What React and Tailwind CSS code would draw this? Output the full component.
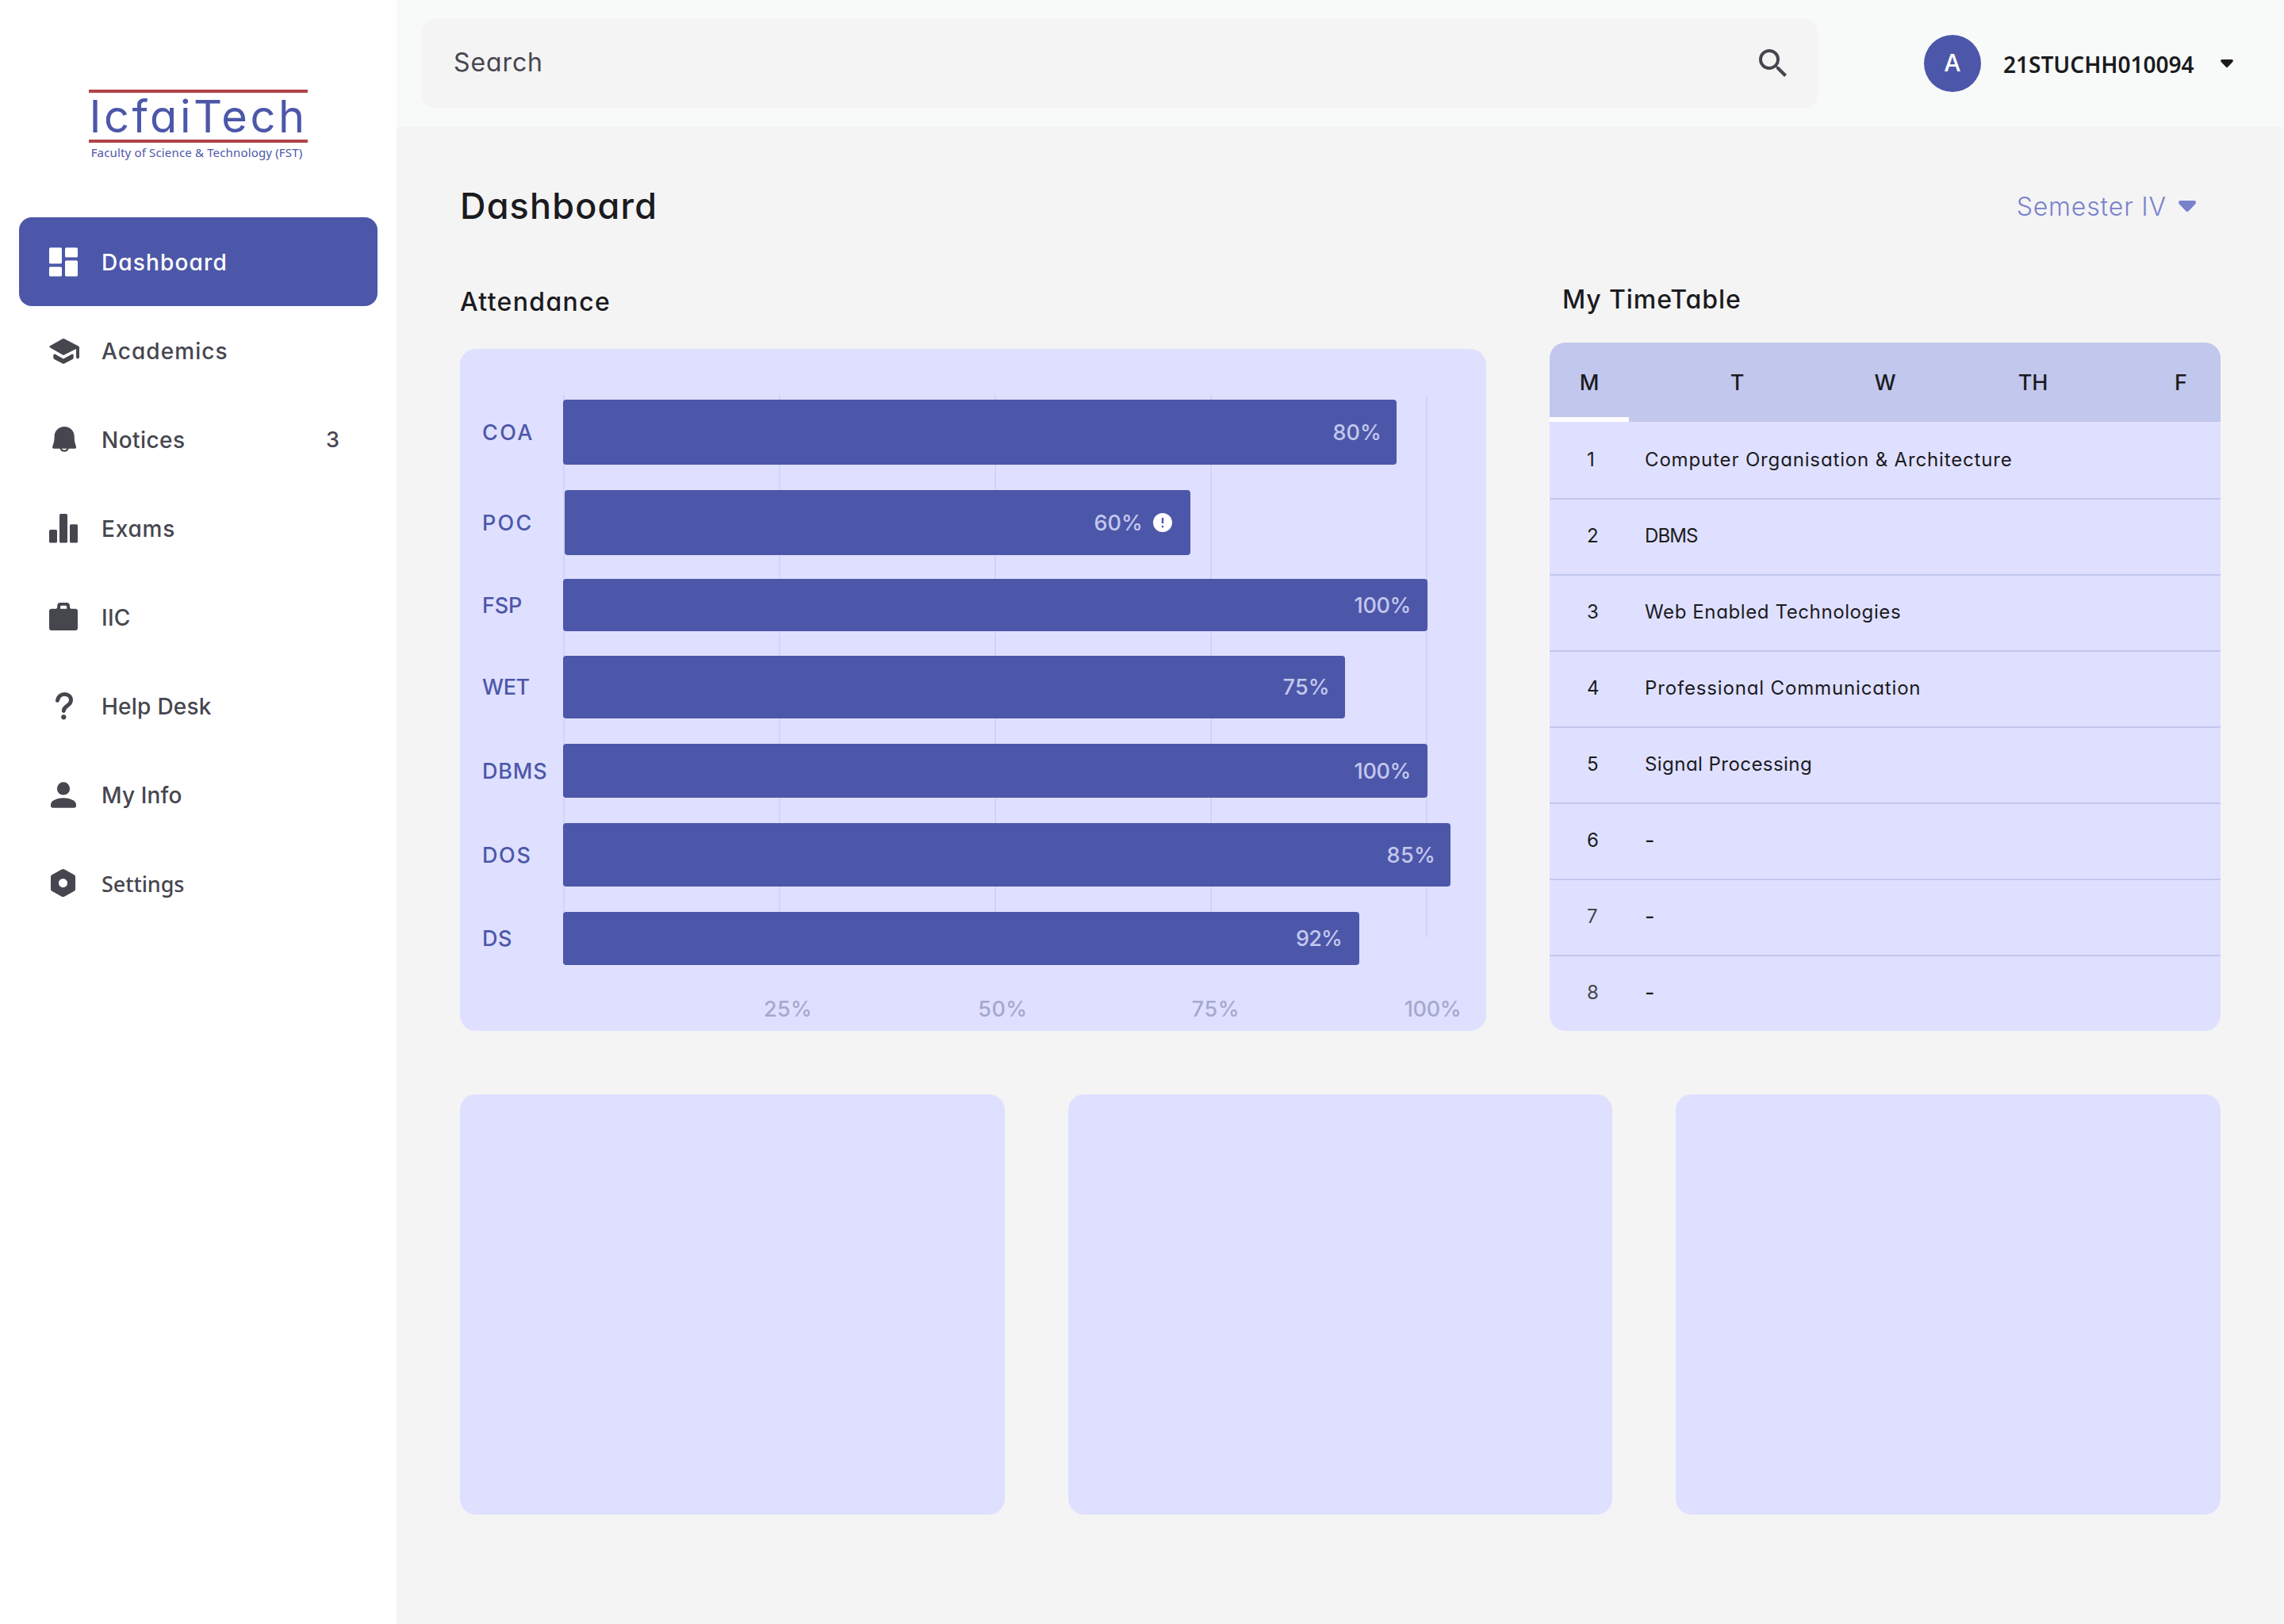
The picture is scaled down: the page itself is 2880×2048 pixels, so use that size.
import React from "react";
import { MdSearch } from "react-icons/md";

function DashboardIcon() {
  return (
    <svg className="size-12" viewBox="0 0 48 48" fill="currentColor">
      <rect x="6" y="6.3" width="16" height="20.2" rx="1.6" />
      <rect x="26" y="6.3" width="16" height="12.2" rx="1.6" />
      <rect x="6" y="30.4" width="16" height="12.2" rx="1.6" />
      <rect x="26" y="22.4" width="16" height="20.2" rx="1.6" />
    </svg>
  );
}

function AcademicsIcon() {
  return (
    <svg className="size-12" viewBox="0 0 48 48" fill="currentColor">
      <path d="M22.9 9.2Q24 8.6 25.1 9.2L43 18.4Q44 19 44 20.1V32.6Q44 34.4 42 34.4T40 32.6V22L25 29.6Q24 30.1 23 29.6L7 20.3Q5.4 19.3 7 18.2Z" />
      <path d="M13.2 28.5L24 34.4L34.8 28.5Q36.7 28 36.7 30V33Q36.7 34.3 35.6 34.9L25 40.6Q24 41.1 23 40.6L12.4 34.9Q11.3 34.3 11.3 33V30Q11.3 28 13.2 28.5Z" />
    </svg>
  );
}

function NoticesIcon() {
  return (
    <svg className="size-12" viewBox="0 0 48 48" fill="currentColor">
      <path d="M25.2 8C32.2 8 37.6 13.2 37.7 20C37.7 25.6 38.4 28.8 39.8 32.6Q40.6 35.8 38.4 35.8H12Q9.6 35.8 10.3 32.6C11.9 28.8 12.6 25.6 12.6 20C12.8 13.2 18.2 8 25.2 8Z" />
      <path d="M20.3 34.5a4.9 5.1 0 0 0 9.6 0" fill="none" stroke="currentColor" strokeWidth="2.2" />
    </svg>
  );
}

function ExamsIcon() {
  return (
    <svg className="size-12" viewBox="0 0 48 48" fill="currentColor">
      <rect x="6" y="26" width="10" height="16.6" rx="1.5" />
      <rect x="19" y="6" width="10" height="36.6" rx="1.5" />
      <rect x="32" y="19.2" width="10" height="23.4" rx="1.5" />
    </svg>
  );
}

function BriefcaseIcon() {
  return (
    <svg className="size-12" viewBox="0 0 48 48" fill="currentColor" fillRule="evenodd">
      <path d="M9 13.8H14.5Q16.2 13.6 16.2 11.5V10Q16.4 6 20 6H28.3Q31.8 6 32 10V11.5Q32 13.6 33.7 13.8H39Q42 13.8 42 16.8V38Q42 41 39 41H9Q6 41 6 38V16.8Q6 13.8 9 13.8ZM21.5 9.8Q20 9.8 20 11.3V13.8H28.2V11.3Q28.2 9.8 26.7 9.8Z" />
    </svg>
  );
}

function HelpIcon() {
  return (
    <svg className="size-12" viewBox="0 0 48 48" fill="none">
      <path d="M16.5 17.3C17.3 12.6 20.8 9.6 25.3 9.6C30.2 9.6 33.5 12.7 33.5 17C33.5 24.2 24.4 23.8 24.3 30.4" stroke="currentColor" strokeWidth="5" strokeLinecap="round" />
      <circle cx="24.3" cy="38.3" r="3.1" fill="currentColor" />
    </svg>
  );
}

function PersonIcon() {
  return (
    <svg className="size-12" viewBox="0 0 48 48" fill="currentColor">
      <circle cx="24" cy="16.4" r="8.1" />
      <path d="M24 28.3C31 28.3 40 31.4 40 36.5V38Q40 40.7 37.3 40.7H10.7Q8 40.7 8 38V36.5C8 31.4 17 28.3 24 28.3Z" />
    </svg>
  );
}

function SettingsIcon() {
  return (
    <svg className="size-12" viewBox="0 0 48 48" fill="currentColor" fillRule="evenodd">
      <path d="M22 6.3Q23.5 5.6 25 6.3L37.6 13.3Q39 14.1 39 15.6V31.4Q39 32.9 37.6 33.7L25 40.7Q23.5 41.4 22 40.7L9.4 33.7Q8 32.9 8 31.4V15.6Q8 14.1 9.4 13.3ZM23.5 18A5.6 5.6 0 1 0 23.5 29.2A5.6 5.6 0 1 0 23.5 18Z" />
    </svg>
  );
}

function Caret({ className }) {
  return (
    <svg className={className} viewBox="0 0 22 14" fill="currentColor">
      <path d="M2.2 0H19.8Q22 0 22 2.2Q22 3.4 21 4.4L12.6 13.2Q11 14.6 9.4 13.2L1 4.4Q0 3.4 0 2.2Q0 0 2.2 0Z" />
    </svg>
  );
}

function AlertIcon() {
  return (
    <svg className="ml-[13px] size-6" viewBox="0 0 24 24">
      <circle cx="12" cy="12" r="12" fill="#fff" />
      <path d="M12 6v7M12 16v2.2" stroke="#4d57a9" strokeWidth="2.4" />
    </svg>
  );
}

const nav = [
  { label: "Dashboard", Icon: DashboardIcon, active: true, text: "text-[28px] tracking-[1.15px]" },
  { label: "Academics", Icon: AcademicsIcon, text: "text-[28px] tracking-[1.07px]" },
  { label: "Notices", Icon: NoticesIcon, badge: "3", text: "text-[28px] tracking-[0.45px]" },
  { label: "Exams", Icon: ExamsIcon, text: "text-[28px] tracking-[0.8px]" },
  { label: "IIC", Icon: BriefcaseIcon, text: "text-[28px] tracking-[0.3px]" },
  { label: "Help Desk", Icon: HelpIcon, text: "text-[28px] tracking-[0.25px]" },
  { label: "My Info", Icon: PersonIcon, text: "text-[28px] tracking-[0.15px]" },
  { label: "Settings", Icon: SettingsIcon, text: "text-[27px] font-['Noto_Sans'] tracking-[-0.1px]" },
];

const bars = [
  { label: "COA", value: "80%", row: "h-[82px]", bar: "w-[1051px] pr-[19px]", text: "tracking-[2.4px]", num: "tracking-[0.1px]" },
  { label: "POC", value: "60%", row: "mt-8 h-[82px]", bar: "ml-[2px] w-[789px] pr-[23px]", alert: true, text: "tracking-[2.2px]", num: "tracking-[0.1px]" },
  { label: "FSP", value: "100%", row: "mt-[30px] h-[66px]", bar: "w-[1090px] pr-[21px]", text: "tracking-[-0.18px]", num: "tracking-[-0.36px]" },
  { label: "WET", value: "75%", row: "mt-[31px] h-[79px]", bar: "w-[986px] pr-[19px]", text: "tracking-[-0.4px]", num: "tracking-[0.3px]" },
  { label: "DBMS", value: "100%", row: "mt-8 h-[68px]", bar: "w-[1090px] pr-[21px]", text: "tracking-[0.8px]", num: "tracking-[-0.36px]" },
  { label: "DOS", value: "85%", row: "mt-8 h-[80px]", bar: "w-[1119px] pr-[19px]", text: "tracking-[1.6px]", num: "tracking-[0.3px]" },
  { label: "DS", value: "92%", row: "mt-8 h-[67px]", bar: "w-[1004px] pr-[22px]", text: "tracking-[0.5px]", num: "tracking-[-0.8px]" },
];

const axis = [
  { label: "25%", cell: "tracking-[0.33px]" },
  { label: "50%", cell: "tracking-[0.44px]" },
  { label: "75%", cell: "pr-[5px] tracking-[0.57px]" },
  { label: "100%", cell: "tracking-[-0.36px]" },
];

const days = ["M", "T", "W", "TH", "F"];

const lessons = [
  { name: "Computer Organisation & Architecture", text: "tracking-[0.85px]" },
  { name: "DBMS", text: "tracking-[-0.9px]" },
  { name: "Web Enabled Technologies", text: "tracking-[0.61px]" },
  { name: "Professional Communication", text: "tracking-[0.85px]" },
  { name: "Signal Processing", text: "tracking-[0.45px]" },
  { name: "-", text: "text-[27px]" },
  { name: "-", text: "text-[27px]" },
  { name: "-", text: "text-[27px]" },
];

function Sidebar() {
  return (
    <aside className="flex w-[500px] shrink-0 flex-col items-center bg-white pt-[113px]">
      <div className="flex w-[276px] flex-col items-center text-[#4d57a9]">
        <div className="flex h-[67px] w-full items-center justify-center border-y-4 border-[#b04347] leading-none">
          <span className="text-[56px] tracking-[3.5px] whitespace-nowrap">IcfaiTech</span>
        </div>
        <span className="mt-[2px] mr-1 font-['Noto_Sans'] text-[15px] leading-5 tracking-[0.16px] whitespace-nowrap">
          Faculty of Science &amp; Technology (FST)
        </span>
      </div>
      <nav className="mt-[72px] flex w-[452px] flex-col">
        {nav.map(({ label, Icon, active, badge, text }) => (
          <div key={label} className={`flex h-28 items-center rounded-2xl pl-8 font-medium ${active ? "bg-[#4d57a9] text-white" : "text-[#46464f]"}`}>
            <Icon />
            <span className={`mt-[2px] ml-6 whitespace-nowrap ${text}`}>{label}</span>
            {badge && <span className="mt-[2px] mr-12 ml-auto text-[27px]">{badge}</span>}
          </div>
        ))}
      </nav>
    </aside>
  );
}

function TopBar() {
  return (
    <header className="flex h-40 shrink-0 items-center bg-[#f8faf9] pl-8">
      <div className="flex h-28 w-[1760px] items-center justify-between rounded-2xl bg-[#f4f4f4] pr-8 pl-10 text-[#46464f]">
        <span className="mb-[2px] text-[32px] tracking-[0.9px]">Search</span>
        <MdSearch className="size-12" />
      </div>
      <div className="ml-[134px] flex size-[72px] items-center justify-center rounded-full bg-[#4d57a9] text-white">
        <span className="mb-[2px] text-[30px] font-medium">A</span>
      </div>
      <span className="mt-px ml-7 font-['Noto_Sans'] text-[28px] font-semibold whitespace-nowrap">21STUCHH010094</span>
      <Caret className="ml-[33px] h-[10px] w-4" />
    </header>
  );
}

function Attendance() {
  return (
    <section className="w-[1294px]">
      <h2 className="mt-[51px] flex h-[38px] items-center text-[32px] font-medium tracking-[1.35px]">Attendance</h2>
      <div className="relative mt-10 h-[860px] rounded-[20px] bg-[#dfe0ff] pt-16 pl-7">
        <div className="absolute top-[58px] left-[130px] flex h-[684px] w-[1090px] justify-between">
          {[0, 25, 50, 75, 100].map((tick) => (
            <div key={tick} className="w-[2px] bg-[#d1d4f6]" />
          ))}
        </div>
        {bars.map((b) => (
          <div key={b.label} className={`relative flex items-center text-[27px] font-medium ${b.row}`}>
            <span className={`mt-[2px] w-[102px] shrink-0 text-[#4d57a9] ${b.text}`}>{b.label}</span>
            <div className={`flex h-full items-center justify-end rounded bg-[#4d57a9] text-[#c3c8ee] ${b.bar}`}>
              <span className={`mt-[2px] ${b.num}`}>{b.value}</span>
              {b.alert && <AlertIcon />}
            </div>
          </div>
        ))}
        <div className="mt-[37px] ml-[250px] flex h-[39px] items-center text-center text-[27px] font-medium text-[#a6a8cd]">
          {axis.map((a) => (
            <div key={a.label} className={`w-[271px] shrink-0 ${a.cell}`}>{a.label}</div>
          ))}
        </div>
      </div>
    </section>
  );
}

function TimeTable() {
  return (
    <section className="w-[846px]">
      <h2 className="mt-[47px] flex h-[39px] items-center pl-4 text-[32px] font-medium tracking-[0.9px]">My TimeTable</h2>
      <div className="mt-[35px] h-[868px] overflow-hidden rounded-[20px] bg-[#dfe0ff]">
        <div className="flex h-[100px] justify-between bg-[#c2c7ed] text-[27px] font-medium">
          {days.map((d, i) => (
            <div key={d} className={`flex w-[100px] items-center justify-center border-y-6 border-t-transparent pt-[2px] ${i === 0 ? "border-b-white" : "border-b-transparent"}`}>
              {d}
            </div>
          ))}
        </div>
        {lessons.map(({ name, text }, i) => (
          <div key={i} className={`flex h-24 items-center pl-[47px] text-[24px] ${i ? "shadow-[inset_0_2px_0_#c2c7ed]" : ""}`}>
            <span className={`w-[73px] ${i > 5 ? "text-[#46464f]" : ""}`}>{i + 1}</span>
            <span className={text}>{name}</span>
          </div>
        ))}
      </div>
    </section>
  );
}

export default function App() {
  return (
    <div className="flex h-[2048px] w-[2880px] bg-[#f4f4f4] font-['Inter',sans-serif] text-[#1b1b1f] [font-feature-settings:'cv11']">
      <Sidebar />
      <div className="flex flex-1 flex-col">
        <TopBar />
        <main className="flex flex-col px-20">
          <div className="mt-[51px] flex h-[100px] items-center justify-between">
            <h1 className="mb-[2px] text-[45px] font-medium tracking-[1.15px]">Dashboard</h1>
            <div className="mr-[31px] flex items-center text-[#7981cd]">
              <span className="text-[32px] font-light tracking-[0.85px]">Semester IV</span>
              <Caret className="mb-[2px] ml-[15px] h-[14px] w-[22px]" />
            </div>
          </div>
          <div className="flex justify-between">
            <Attendance />
            <TimeTable />
          </div>
          <div className="mt-20 grid grid-cols-3 gap-20">
            <div className="h-[530px] rounded-[20px] bg-[#dfe0ff]" />
            <div className="h-[530px] rounded-[20px] bg-[#dfe0ff]" />
            <div className="h-[530px] rounded-[20px] bg-[#dfe0ff]" />
          </div>
        </main>
      </div>
    </div>
  );
}
